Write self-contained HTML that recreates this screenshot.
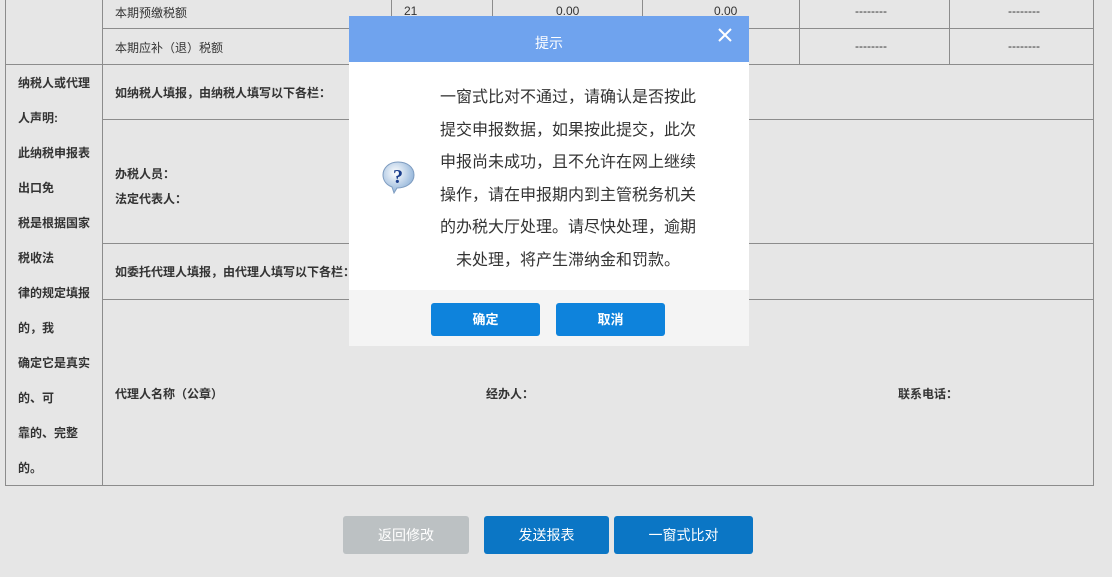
<!DOCTYPE html>
<html><head><meta charset="utf-8"><style>
body{margin:0;width:1112px;height:577px;background:#e6e6e6;position:relative;overflow:hidden;font-family:"Liberation Sans","Noto Sans CJK SC",sans-serif;color:#333}
.h{position:absolute;height:1px;background:#8c8c8c}
.v{position:absolute;width:1px;background:#8c8c8c}
.t{position:absolute;font-size:12px;white-space:nowrap}
.b{font-weight:bold}
.btn{position:absolute;color:#fff;font-size:14px;text-align:center;border-radius:3px}
</style></head><body>
<div class="v" style="left:5px;top:0;height:486px"></div>
<div class="v" style="left:102px;top:0;height:486px"></div>
<div class="v" style="left:391px;top:0;height:64px"></div>
<div class="v" style="left:492px;top:0;height:64px"></div>
<div class="v" style="left:642px;top:0;height:64px"></div>
<div class="v" style="left:799px;top:0;height:64px"></div>
<div class="v" style="left:949px;top:0;height:64px"></div>
<div class="v" style="left:1093px;top:0;height:486px"></div>
<div class="h" style="left:102px;top:28px;width:992px"></div>
<div class="h" style="left:5px;top:64px;width:1089px"></div>
<div class="h" style="left:102px;top:119px;width:992px"></div>
<div class="h" style="left:102px;top:243px;width:992px"></div>
<div class="h" style="left:102px;top:299px;width:992px"></div>
<div class="h" style="left:5px;top:485px;width:1089px"></div>
<div class="t" style="left:115px;top:4px">本期预缴税额</div>
<div class="t" style="left:115px;top:39px">本期应补（退）税额</div>
<div class="t" style="left:404px;top:4px">21</div>
<div class="t" style="left:556px;top:4px">0.00</div>
<div class="t" style="left:714px;top:4px">0.00</div>
<div class="t" style="left:855px;top:4px">--------</div>
<div class="t" style="left:1008px;top:4px">--------</div>
<div class="t" style="left:855px;top:39px">--------</div>
<div class="t" style="left:1008px;top:39px">--------</div>
<div class="t b" style="left:18px;top:66px;line-height:35px">纳税人或代理<br>人声明:<br>此纳税申报表<br>出口免<br>税是根据国家<br>税收法<br>律的规定填报<br>的，我<br>确定它是真实<br>的、可<br>靠的、完整<br>的。</div>
<div class="t b" style="left:115px;top:84px">如纳税人填报，由纳税人填写以下各栏：</div>
<div class="t b" style="left:115px;top:165px">办税人员：</div>
<div class="t b" style="left:115px;top:190px">法定代表人：</div>
<div class="t b" style="left:115px;top:263px">如委托代理人填报，由代理人填写以下各栏：</div>
<div class="t b" style="left:115px;top:385px">代理人名称（公章）</div>
<div class="t b" style="left:486px;top:385px">经办人：</div>
<div class="t b" style="left:898px;top:385px">联系电话：</div>
<div class="btn" style="left:343px;top:516px;width:126px;height:38px;line-height:38px;background:#bcc1c3">返回修改</div>
<div class="btn" style="left:484px;top:516px;width:125px;height:38px;line-height:38px;background:#0b76c5">发送报表</div>
<div class="btn" style="left:614px;top:516px;width:139px;height:38px;line-height:38px;background:#0b76c5">一窗式比对</div>
<div style="position:absolute;left:349px;top:16px;width:400px;height:330px;background:#fff">
 <div style="height:46px;background:#6fa3ee;color:#fff;font-size:14px;text-align:center;line-height:54px">提示</div>
 <div style="position:absolute;right:16px;top:11px;width:16px;height:16px">
  <svg width="16" height="16"><path d="M2 2L14 14M14 2L2 14" stroke="#fff" stroke-width="2"/></svg></div>
 <svg style="position:absolute;left:33px;top:144px" width="34" height="34" viewBox="0 0 34 34">
  <defs><radialGradient id="g" cx="40%" cy="35%" r="65%"><stop offset="0" stop-color="#fff"/><stop offset="1" stop-color="#8fb2d8"/></radialGradient></defs>
  <path d="M16 2C7 2 1 8 1 15c0 6 4 10 9 12l2 6 3-5c9 0 17-5 17-13S25 2 16 2z" fill="url(#g)" stroke="#7e9cc0"/>
  <text x="16" y="23" text-anchor="middle" font-family="Liberation Serif" font-weight="bold" font-size="20" fill="#1a3d8c">?</text></svg>
 <div style="position:absolute;left:60px;top:66px;width:318px;font-size:16px;line-height:32.5px;color:#333;text-align:center;white-space:nowrap">一窗式比对不通过，请确认是否按此<br>提交申报数据，如果按此提交，此次<br>申报尚未成功，且不允许在网上继续<br>操作，请在申报期内到主管税务机关<br>的办税大厅处理。请尽快处理，逾期<br>未处理，将产生滞纳金和罚款。</div>
 <div style="position:absolute;left:0;top:274px;width:400px;height:56px;background:#f4f4f4"></div>
 <div class="btn" style="left:82px;top:287px;width:109px;height:33px;line-height:33px;background:#0e83dc;font-size:13px;font-weight:bold">确定</div>
 <div class="btn" style="left:207px;top:287px;width:109px;height:33px;line-height:33px;background:#0e83dc;font-size:13px;font-weight:bold">取消</div>
</div>
</body></html>
